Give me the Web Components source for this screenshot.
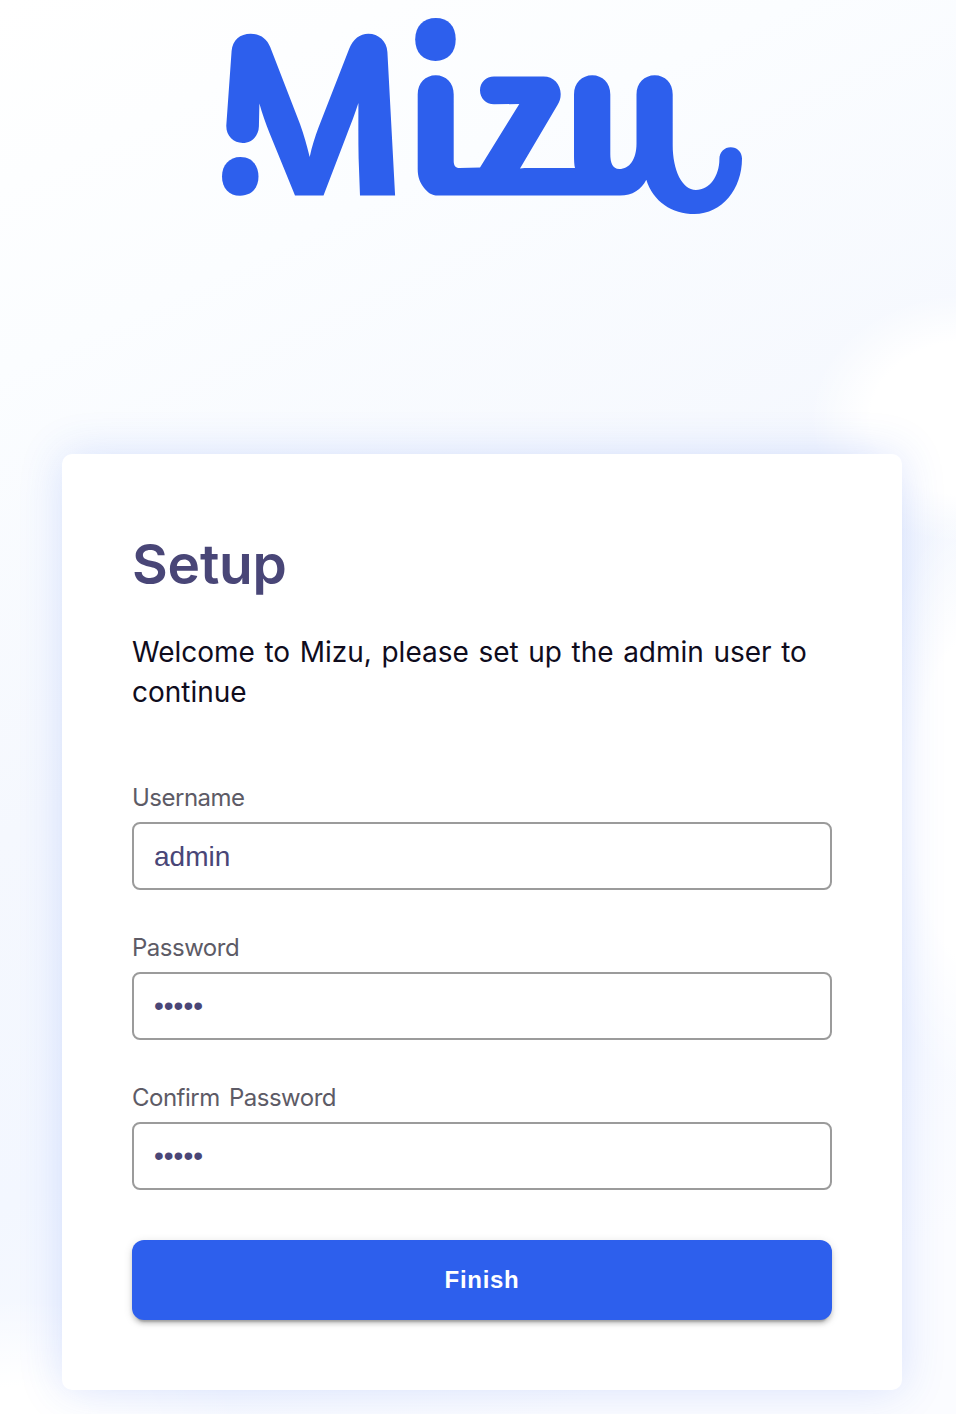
<!DOCTYPE html>
<html lang="en">
<head>
<meta charset="utf-8">
<title>Mizu Setup</title>
<style>
html, body { margin: 0; }
body { font-family: Inter, "Liberation Sans", sans-serif; }
</style>
</head>
<body>
<setup-page>
  <mizu-logo slot="brand"></mizu-logo>
  <setup-card heading="Setup">
    <span slot="intro">Welcome to Mizu, please set up the admin user to continue</span>
    <form-field label="Username" type="text" value="admin"></form-field>
    <form-field label="Password" type="password" value="admin"></form-field>
    <form-field label="Confirm Password" type="password" value="admin"></form-field>
    <primary-button slot="action">Finish</primary-button>
  </setup-card>
</setup-page>
<script>
class BaseElement extends HTMLElement {
  render(html) {
    const t = document.createElement('template');
    t.innerHTML = html;
    this.attachShadow({ mode: 'open' }).append(t.content.cloneNode(true));
  }
}

customElements.define('setup-page', class extends BaseElement {
  connectedCallback() {
    this.render(`<style>
      :host { display: flex; flex-direction: column; box-sizing: border-box; width: 956px; height: 1414px; overflow: hidden;
        background:
          radial-gradient(ellipse 160px 125px at 970px 418px, #fff 62%, rgba(255,255,255,0) 100%),
          radial-gradient(ellipse 100px 290px at 970px 800px, #fff 55%, rgba(255,255,255,0) 100%),
          radial-gradient(ellipse 220px 125px at 20px 1424px, #fff 30%, rgba(255,255,255,0) 100%),
          linear-gradient(155deg, #fff 0%, #fbfdff 20%, #f5f8fe 45%, #f3f7ff 65%, #fbfcff 90%); }
      header { height: 454px; flex: none; padding-left: 212px; box-sizing: border-box; }
      main { padding: 0 54px 0 62px; }
    </style><header><slot name="brand"></slot></header><main><slot></slot></main>`);
  }
});

customElements.define('mizu-logo', class extends BaseElement {
  connectedCallback() {
    this.render(`<style>:host { display: block; } svg { display: block; }</style>
    <svg width="540" height="230" viewBox="212 0 540 230" fill="#2d5fed" role="img" aria-label="Mizu">
      <path d="M231.6 51C232.5 40 240 33.7 250.7 33.7C260 33.7 267 38.5 270.2 47L300 124C304 135 307 146 309.7 157C312 146 315 137 318.5 127.5L349.3 48.5C353 39 360 33.7 368.3 33.7C378.5 33.7 386.8 41 387.4 52L395.1 195.4H360L358.6 158C358.2 140 358.4 121 358.4 103C354.5 115 351 124 346.5 135.5L323.5 195.4H295L269.5 133C265.5 123 262 113 259.4 103.5L258.9 126.5C258.7 136 251.5 143 242.7 143C233.5 143 226 136 226.3 125.500Z"/>
      <path d="M240.300 157C251.500 157 258.500 165 258.500 176.500C258.500 188 251.500 195.800 240 195.800C229 195.800 222 188 222 176.500C222 165 229.500 157 240.300 157Z"/>
      <path d="M435.800 17.900C448.200 17.900 455.700 26 455.700 39.300C455.700 52.500 448 60.900 435.500 60.900C423 60.900 415.200 52.500 415.200 39.300C415.200 26 423.500 17.900 435.800 17.900Z"/>
      <path d="M417.700 94.500C417.700 83 425.500 75.300 435.700 75.300C446 75.300 453.700 83 453.700 94.500V161C453.700 165.500 455.500 168 459.500 168L480 167.600L519.300 104L494 104.300C486 104.300 480 98.300 480 90.300C480 82.300 486 76.400 494 76.400H543.500C553.500 76.400 560.700 84 560.700 94C560.700 98.500 559.500 101.500 557.500 105L520 168.600C523 168 526 168 530 168H575C574.200 165 574 160 574 155V94.500C574 83 582 75.300 592.200 75.300C602.500 75.300 610.300 83 610.300 94.500V154C610.300 162.500 612.500 169 619.300 169C629.500 169 636.500 159.500 636.500 143.500V94.500C636.500 83 644.500 75.300 654.700 75.300C665 75.300 672.700 83 672.700 94.500V145C672.700 170 682 190 696 190C709.500 190 719.400 176 719.400 159C719.400 152 724.500 147.200 730.700 147.200C737 147.200 742 152 742 158.500C742 189 722 214 694.500 214C672 214 653 201.500 646.300 179.700C641.500 189.500 632.500 195.600 620 195.600H438C431.500 195.600 427.500 192.500 423.700 187.500C419.700 182.300 417.700 177 417.700 169Z"/>
    </svg>`);
  }
});

customElements.define('setup-card', class extends BaseElement {
  connectedCallback() {
    this.render(`<style>
      :host { display: flex; flex-direction: column; box-sizing: border-box; height: 936px; padding: 78px 70px 70px; border-radius: 10px; background: #fff; box-shadow: 0 0 44px rgba(45,95,237,.17); }
      h1 { margin: 0; font: 600 55px/64px Inter, sans-serif; letter-spacing: -.2px; color: #494677; }
      p { margin: 36px 0 0; width: 700px; font-size: 28px; line-height: 40px; word-spacing: 1.7px; color: #0f0c1d; }
      .fields { display: flex; flex-direction: column; gap: 44px; margin-top: 72px; }
      .action { margin-top: 50px; }
    </style><h1></h1><p><slot name="intro"></slot></p><div class="fields"><slot></slot></div><div class="action"><slot name="action"></slot></div>`);
    this.shadowRoot.querySelector('h1').textContent = this.getAttribute('heading');
  }
});

customElements.define('form-field', class extends BaseElement {
  connectedCallback() {
    this.render(`<style>
      :host { display: block; }
      label { display: block; height: 38px; font-size: 24px; line-height: 28px; letter-spacing: -.5px; word-spacing: 3px; color: #5d5b66; white-space: nowrap; }
      input { display: block; box-sizing: border-box; width: 100%; height: 68px; margin: 0; padding: 1px 20px 0; border: 2px solid #9b9b9b; border-radius: 8px; background: #fff; font: 28px "Liberation Sans", Arial, sans-serif; color: #494677; outline: 0; }
      input[type=password] { padding-top: 0; }
    </style><label for="f"></label><input id="f">`);
    const input = this.shadowRoot.querySelector('input');
    this.shadowRoot.querySelector('label').textContent = this.getAttribute('label');
    input.type = this.getAttribute('type');
    input.value = this.getAttribute('value');
  }
});

customElements.define('primary-button', class extends BaseElement {
  connectedCallback() {
    this.render(`<style>
      :host { display: block; }
      button { display: block; width: 100%; height: 80px; padding: 0; border: 0; border-radius: 12px; background: #2d5fed; color: #fff; font: 700 24px "Liberation Sans", Arial, sans-serif; letter-spacing: .7px; box-shadow: 0 6px 2px -4px rgba(0,0,0,.2), 0 4px 4px rgba(0,0,0,.14), 0 2px 10px rgba(0,0,0,.12); }
    </style><button type="button"><slot></slot></button>`);
  }
});
</script>
</body>
</html>
